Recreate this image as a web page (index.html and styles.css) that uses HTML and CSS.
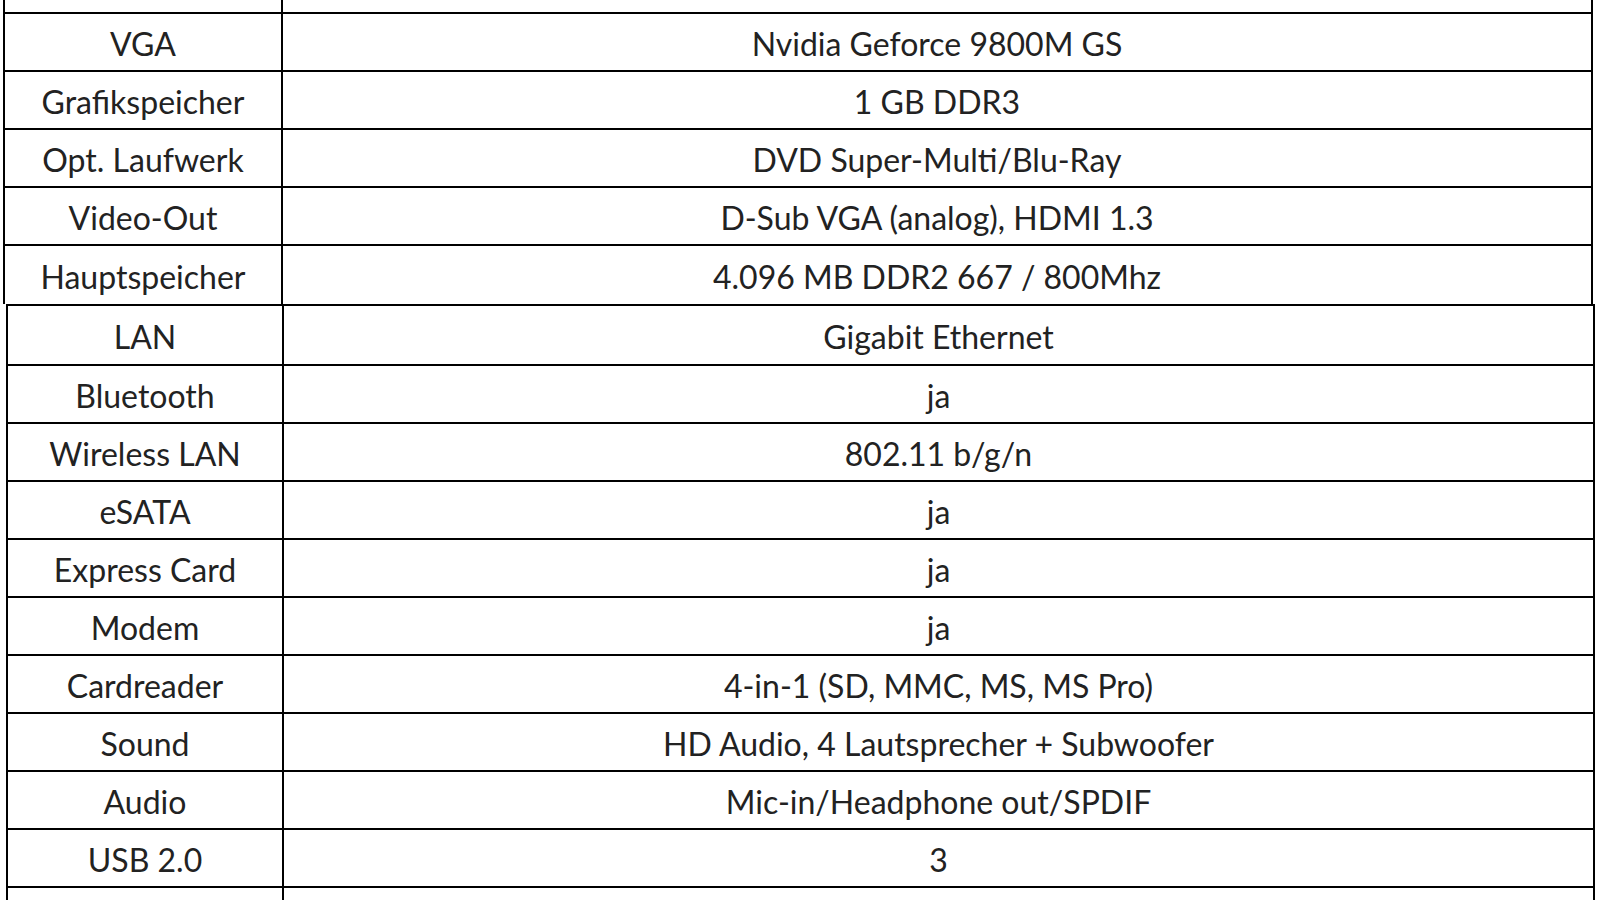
FILE: index.html
```html
<!DOCTYPE html>
<html lang="de">
<head>
<meta charset="utf-8">
<title>Technische Daten</title>
<link rel="stylesheet" href="styles.css">
</head>
<body>
<div class="page">
  <div class="table t1">
    <div class="row stub"><div class="c k"></div><div class="c v"></div></div>
    <div class="row"><div class="c k">VGA</div><div class="c v">Nvidia Geforce 9800M GS</div></div>
    <div class="row"><div class="c k">Grafikspeicher</div><div class="c v">1 GB DDR3</div></div>
    <div class="row"><div class="c k">Opt. Laufwerk</div><div class="c v">DVD Super-Multi/Blu-Ray</div></div>
    <div class="row"><div class="c k">Video-Out</div><div class="c v">D-Sub VGA (analog), HDMI 1.3</div></div>
    <div class="row last"><div class="c k">Hauptspeicher</div><div class="c v">4.096 MB DDR2 667 / 800Mhz</div></div>
  </div>
  <div class="table t2">
    <div class="row first"><div class="c k">LAN</div><div class="c v">Gigabit Ethernet</div></div>
    <div class="row"><div class="c k">Bluetooth</div><div class="c v">ja</div></div>
    <div class="row"><div class="c k">Wireless LAN</div><div class="c v">802.11 b/g/n</div></div>
    <div class="row"><div class="c k">eSATA</div><div class="c v">ja</div></div>
    <div class="row"><div class="c k">Express Card</div><div class="c v">ja</div></div>
    <div class="row"><div class="c k">Modem</div><div class="c v">ja</div></div>
    <div class="row"><div class="c k">Cardreader</div><div class="c v">4-in-1 (SD, MMC, MS, MS Pro)</div></div>
    <div class="row"><div class="c k">Sound</div><div class="c v">HD Audio, 4 Lautsprecher + Subwoofer</div></div>
    <div class="row"><div class="c k">Audio</div><div class="c v">Mic-in/Headphone out/SPDIF</div></div>
    <div class="row"><div class="c k">USB 2.0</div><div class="c v">3</div></div>
    <div class="row tail"><div class="c k"></div><div class="c v"></div></div>
  </div>
</div>
</body>
</html>
```
FILE: styles.css
```css
html, body {
  margin: 0;
  padding: 0;
  background: #ffffff;
}
body {
  width: 1600px;
  height: 900px;
  overflow: hidden;
  font-family: Lato, "Liberation Sans", sans-serif;
  font-size: 32px;
  color: #222;
}
.page {
  display: flex;
  flex-direction: column;
}
.table {
  display: flex;
  flex-direction: column;
  border-left: 2px solid #000;
  border-right: 2px solid #000;
  box-sizing: border-box;
}
.t1 {
  margin-left: 3px;
  width: 1590px;
  --kw: 278px;
}
.t2 {
  margin-left: 6px;
  width: 1589px;
  border-top: 2px solid #000;
  --kw: 276px;
}
.row {
  display: grid;
  grid-template-columns: var(--kw) 1fr;
  height: 58px;
  box-sizing: border-box;
  border-bottom: 2px solid #000;
}
.row.stub { height: 14px; }
.row.first { height: 60px; }
.row.last { border-bottom: none; }
.row.tail { height: 13px; border-bottom: none; }
.c {
  display: flex;
  align-items: center;
  justify-content: center;
  padding-top: 2px;
  box-sizing: border-box;
  white-space: nowrap;
  overflow: hidden;
}
.k {
  border-right: 2px solid #000;
}
```
